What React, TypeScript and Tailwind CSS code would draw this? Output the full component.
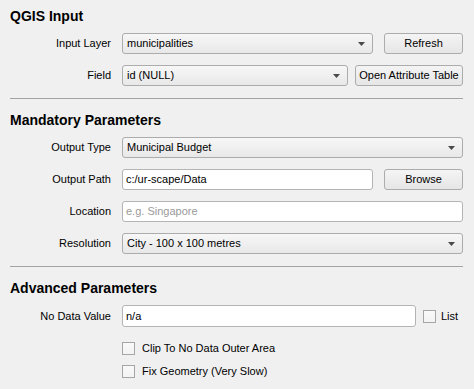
import React from 'react';

const Arrow = () => (
  <svg width="7" height="4" viewBox="0 0 7 4" className="shrink-0">
    <polygon points="0,0 7,0 3.5,4" fill="#4a4a4a" />
  </svg>
);

const Combo = ({ value, className = '' }: { value: string; className?: string }) => (
  <div
    className={`h-[21px] flex items-center justify-between pl-[4px] pr-[7px] rounded-[3px] border border-[#acacac] bg-gradient-to-b from-[#f7f7f7] to-[#e8e8e8] text-black ${className}`}
  >
    <span>{value}</span>
    <Arrow />
  </div>
);

const Input = ({ value, placeholder, className = '' }: { value?: string; placeholder?: string; className?: string }) => (
  <div
    className={`h-[21px] flex items-center pl-[3px] rounded-[3px] border border-[#b4b4b4] bg-white ${className}`}
  >
    {value ? <span className="text-black">{value}</span> : <span className="text-[#9a9a9a]">{placeholder}</span>}
  </div>
);

const Button = ({ label, className = '' }: { label: string; className?: string }) => (
  <div
    className={`h-[21px] flex items-center justify-center rounded-[3px] border border-[#acacac] bg-gradient-to-b from-[#f4f4f4] to-[#e6e6e6] text-black ${className}`}
  >
    {label}
  </div>
);

const Check = () => (
  <div className="w-[13px] h-[13px] shrink-0 border border-[#a6a6a6] bg-gradient-to-b from-[#f9f9f9] to-[#f3f3f3]" />
);

const Row = ({ label, children }: { label: string; children: React.ReactNode }) => (
  <div className="flex items-center">
    <div className="w-[101px] text-right text-black">{label}</div>
    <div className="flex-1 flex items-center ml-[11px]">{children}</div>
  </div>
);

const Title = ({ text, className = '' }: { text: string; className?: string }) => (
  <div className={`h-[16px] leading-[16px] text-[14px] font-bold text-black ${className}`}>{text}</div>
);

export default function App() {
  return (
    <div className="w-[474px] h-[389px] bg-[#f0f0f0] pl-[10px] pr-[11px] pt-[8px] text-[11px] font-['Liberation_Sans',Arial,sans-serif] overflow-hidden">
      {/* QGIS Input */}
      <Title text="QGIS Input" />
      <div className="mt-[9px] flex flex-col gap-[11px]">
        <Row label="Input Layer">
          <Combo value="municipalities" className="flex-1" />
          <Button label="Refresh" className="w-[79px] ml-[11px]" />
        </Row>
        <Row label="Field">
          <Combo value="id (NULL)" className="flex-1" />
          <Button label="Open Attribute Table" className="w-[108px] ml-[7px]" />
        </Row>
      </div>

      <div className="mt-[12px] h-px bg-[#a3a3a3]" />

      {/* Mandatory Parameters */}
      <Title text="Mandatory Parameters" className="mt-[13px]" />
      <div className="mt-[9px] flex flex-col gap-[11px]">
        <Row label="Output Type">
          <Combo value="Municipal Budget" className="flex-1" />
        </Row>
        <Row label="Output Path">
          <Input value="c:/ur-scape/Data" className="flex-1" />
          <Button label="Browse" className="w-[79px] ml-[11px]" />
        </Row>
        <Row label="Location">
          <Input placeholder="e.g. Singapore" className="flex-1" />
        </Row>
        <Row label="Resolution">
          <Combo value="City - 100 x 100 metres" className="flex-1" />
        </Row>
      </div>

      <div className="mt-[12px] h-px bg-[#a3a3a3]" />

      {/* Advanced Parameters */}
      <Title text="Advanced Parameters" className="mt-[13px]" />
      <div className="mt-[9px]">
        <Row label="No Data Value">
          <Input value="n/a" className="flex-1 h-[22px]" />
          <div className="flex items-center ml-[7px] w-[40px]">
            <Check />
            <span className="ml-[5px] text-black">List</span>
          </div>
        </Row>
      </div>
      <div className="mt-[15px] ml-[112px] flex flex-col gap-[10px]">
        <div className="flex items-center h-[13px]">
          <Check />
          <span className="ml-[7px] text-black">Clip To No Data Outer Area</span>
        </div>
        <div className="flex items-center h-[13px]">
          <Check />
          <span className="ml-[7px] text-black">Fix Geometry (Very Slow)</span>
        </div>
      </div>
    </div>
  );
}
